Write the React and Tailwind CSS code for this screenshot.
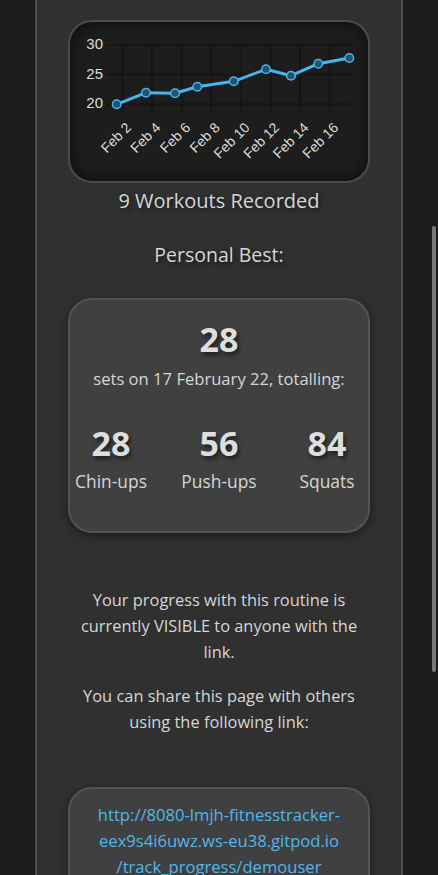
import React from "react";

const points = [
  [116.7, 104.3],
  [146, 92.7],
  [175, 93.3],
  [197.3, 86.7],
  [233.7, 81.3],
  [266, 69.3],
  [291, 75.7],
  [318.3, 63.7],
  [349.3, 58],
];

const dates = ["Feb 2", "Feb 4", "Feb 6", "Feb 8", "Feb 10", "Feb 12", "Feb 14", "Feb 16"];
const yTicks = [
  ["30", 45],
  ["25", 74.6],
  ["20", 104.3],
];

const stats = [
  { value: 28, name: "Chin-ups" },
  { value: 56, name: "Push-ups" },
  { value: 84, name: "Squats" },
];

function ProgressChart() {
  return (
    <svg width="298" height="159" viewBox="70 22 298 159" className="block">
      {/* grid */}
      {yTicks.map(([, y]) => (
        <line key={y} x1="107" x2="351" y1={y} y2={y} stroke="#151515" strokeWidth="2" />
      ))}
      {dates.map((d, i) => {
        const x = 122.5 + i * 29.6;
        return <line key={d} x1={x} x2={x} y1="45" y2="113" stroke="#151515" strokeWidth="2" />;
      })}

      {/* axis labels */}
      {yTicks.map(([label, y]) => (
        <text
          key={label}
          x="103"
          y={y}
          textAnchor="end"
          dominantBaseline="middle"
          fill="#dcdcdc"
          fontSize="15"
          fontFamily="'Liberation Sans', Arial, sans-serif"
        >
          {label}
        </text>
      ))}
      {dates.map((d, i) => {
        const x = 122.5 + i * 29.6 + 9.5;
        const y = 128.5;
        return (
          <text
            key={d}
            x={x}
            y={y}
            textAnchor="end"
            fill="#dcdcdc"
            fontSize="14"
            fontFamily="'Liberation Sans', Arial, sans-serif"
            transform={`rotate(-45 ${x} ${y})`}
          >
            {d}
          </text>
        );
      })}

      {/* data */}
      <polyline
        points={points.map((p) => p.join(",")).join(" ")}
        fill="none"
        stroke="#45b5ef"
        strokeWidth="3"
        strokeLinejoin="round"
        strokeLinecap="round"
      />
      {points.map(([x, y], i) => (
        <circle key={i} cx={x} cy={y} r="4.3" fill="#23536e" stroke="#45b5ef" strokeWidth="1.5" />
      ))}
    </svg>
  );
}

export default function App() {
  return (
    <div className="relative h-[875px] overflow-hidden bg-[#1b1b1b] font-['Segoe_UI','Open_Sans',sans-serif] text-[#d6d6d6]">
      <div className="ml-[35px] w-[368px] min-h-[875px] border-x-2 border-[#4f4f4f] bg-[#303030] pt-[20px] text-center">
        <div className="mx-auto h-[163px] w-[302px] overflow-hidden rounded-[24px] border-2 border-[#4b4b4b] bg-[#1d1d1d] shadow-[inset_0_0_16px_rgba(0,0,0,0.6)]">
          <ProgressChart />
        </div>

        <h2 className="mt-[4px] text-[20px] leading-[28px] [text-shadow:2px_2px_4px_rgba(0,0,0,0.55)]">
          9 Workouts Recorded
        </h2>

        <h3 className="mt-[26px] text-[19.5px] leading-[28px] [text-shadow:2px_2px_4px_rgba(0,0,0,0.55)]">
          Personal Best:
        </h3>

        <div className="mx-auto mt-[29px] h-[235px] w-[302px] rounded-[24px] border-2 border-[#535353] bg-[#404040] pt-[19px] shadow-[0_3px_10px_rgba(0,0,0,0.45)]">
          <div className="text-[34px] font-bold leading-[40px] text-[#dedede] [text-shadow:2px_3px_4px_rgba(0,0,0,0.55)]">
            28
          </div>
          <p className="mt-[8px] text-[16.6px] leading-[24px]">sets on 17 February 22, totalling:</p>

          <div className="mt-[32px] -mx-[17px] flex justify-center">
            {stats.map((s) => (
              <div key={s.name} className="w-[108px] shrink-0">
                <div className="text-[34px] font-bold leading-[40px] text-[#dedede] [text-shadow:2px_3px_4px_rgba(0,0,0,0.55)]">
                  {s.value}
                </div>
                <div className="mt-[6px] text-[17.4px] leading-[24px]">{s.name}</div>
              </div>
            ))}
          </div>
        </div>

        <p className="mx-auto mt-[54px] w-[296px] text-[16.4px] leading-[26px]">
          Your progress with this routine is currently VISIBLE to anyone with the link.
        </p>
        <p className="mx-auto mt-[18px] w-[296px] text-[16.4px] leading-[26px]">
          You can share this page with others using the following link:
        </p>

        <div className="mx-auto mt-[52px] w-[302px] rounded-[24px] border-2 border-[#535353] bg-[#404040] px-[10px] pt-[13px] pb-[20px] shadow-[0_3px_10px_rgba(0,0,0,0.45)]">
          <a href="#" className="text-[16.6px] leading-[26px] text-[#52b6ea]">
            http://8080-lmjh-fitnesstracker-
            <br />
            eex9s4i6uwz.ws-eu38.gitpod.io
            <br />
            /track_progress/demouser
          </a>
        </div>
      </div>

      <div className="absolute right-[2px] top-[226px] h-[446px] w-[4px] rounded-full bg-[#787878]" />
    </div>
  );
}
